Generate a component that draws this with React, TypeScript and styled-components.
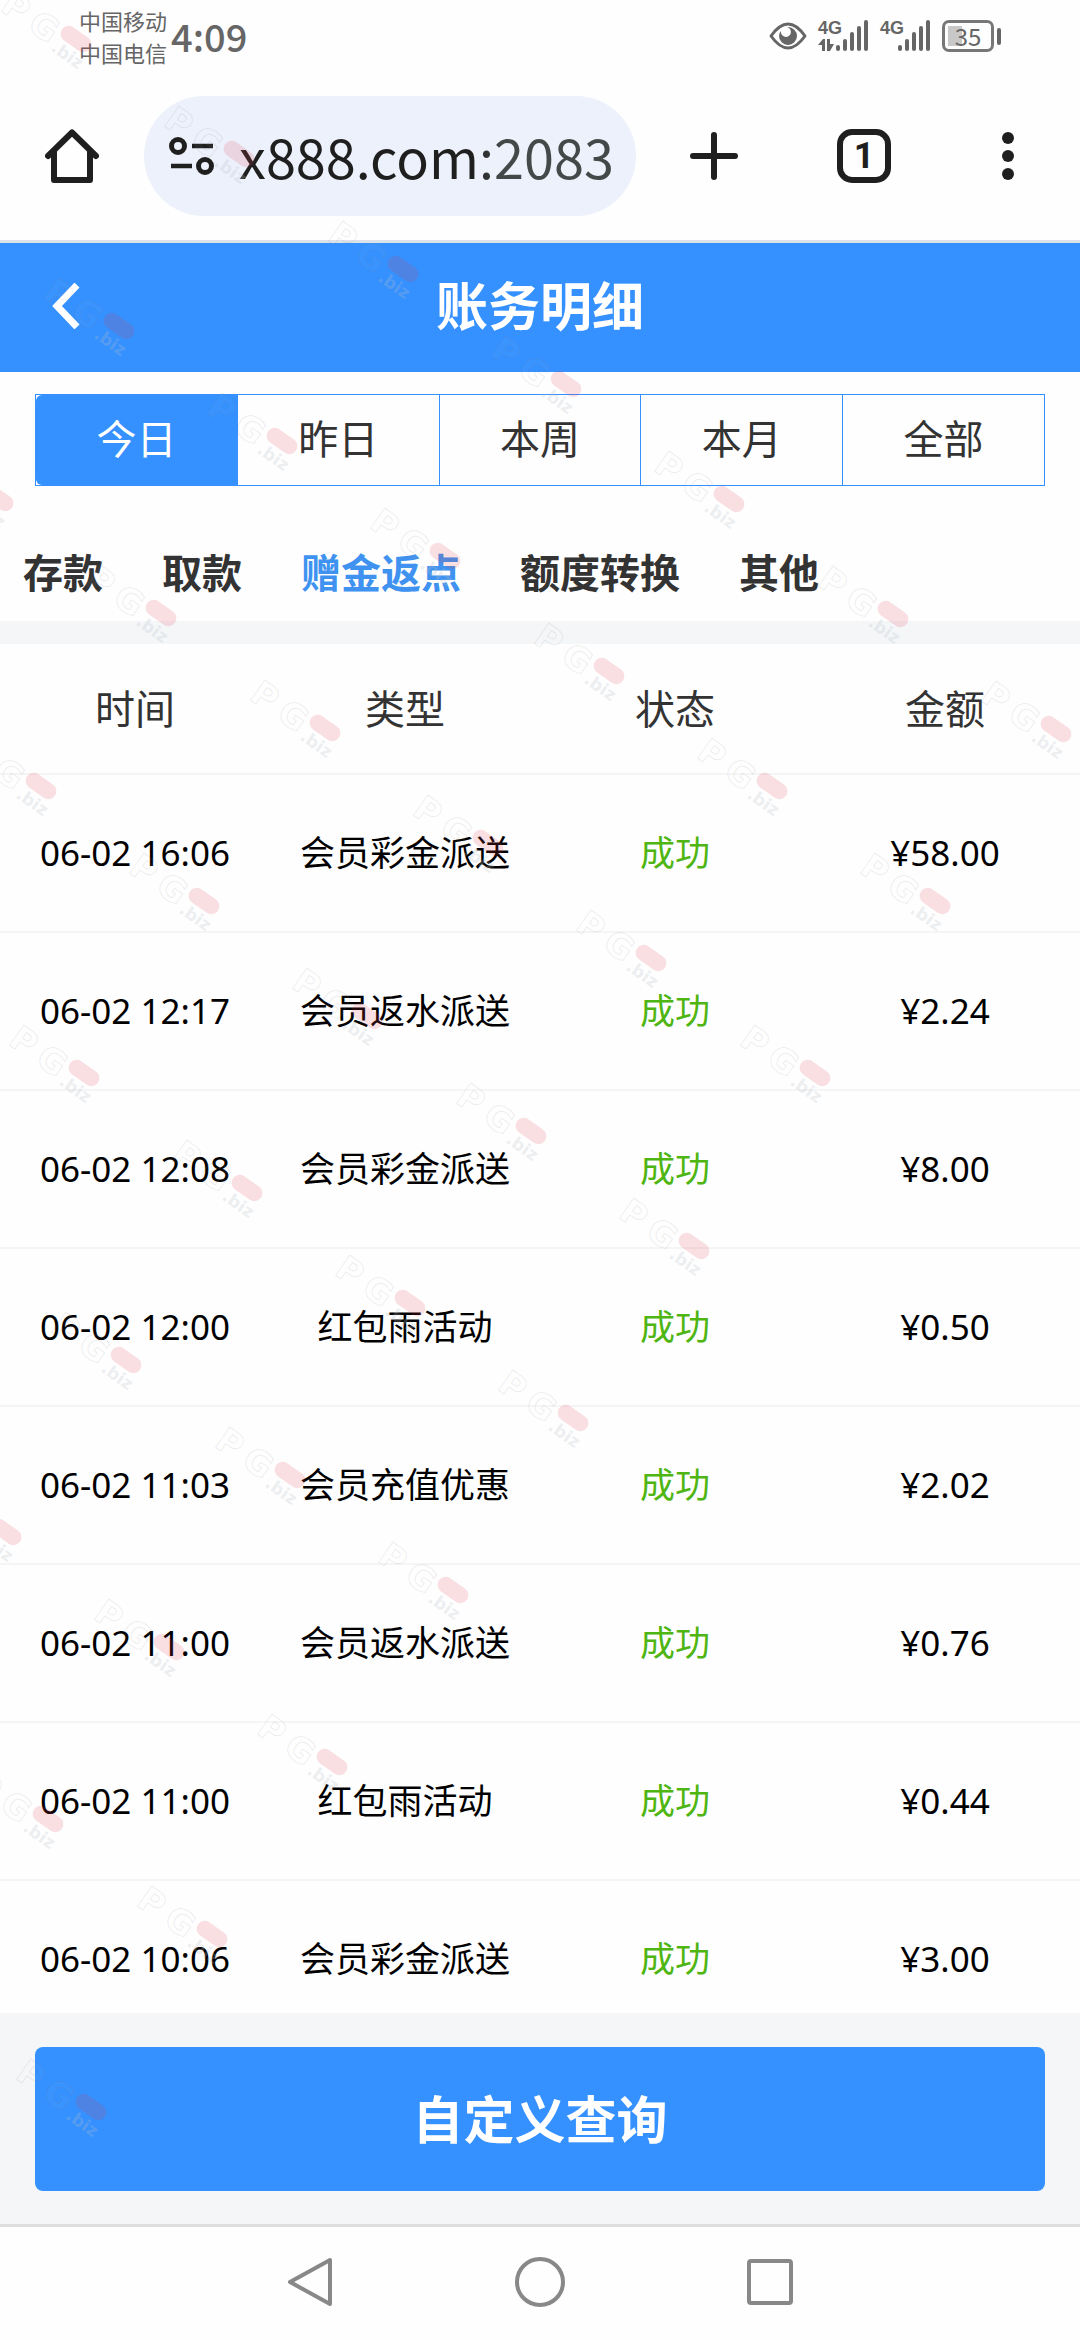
import React, { useState } from 'react';
import styled, { createGlobalStyle } from 'styled-components';

const BLUE = '#3491ff';
const INK = '#1f1f1f';
const GREY = '#666666';
const BODY_FONT = '"Noto Sans", "Noto Sans CJK SC", sans-serif';
const CJK_FONT = '"Noto Sans CJK SC", sans-serif';

const GlobalStyle = createGlobalStyle`
  *, *::before, *::after { box-sizing: border-box; }
  body { margin: 0; background: #fff; font-family: ${BODY_FONT}; }
  button, input { font: inherit; color: inherit; border: 0; padding: 0; margin: 0; background: none; border-radius: 0; }
  button { cursor: pointer; }
  svg { display: block; flex: none; }
`;

const Screen = styled.div`
  position: relative;
  display: flex;
  flex-direction: column;
  height: 100vh;
  overflow: hidden;
  background: #fefefe;
`;

/* ---------- status bar ---------- */

const StatusBar = styled.div`
  display: flex;
  align-items: center;
  justify-content: space-between;
  height: 72px;
  padding: 0 79px;
  color: ${GREY};
  font-family: ${CJK_FONT};
`;

const StatusGroup = styled.div<{ $gap: number }>`
  display: flex;
  align-items: center;
  gap: ${(p) => p.$gap}px;
`;

const Carriers = styled.div`
  font-size: 22px;
  line-height: 32px;
`;

const Clock = styled.time`
  font-size: 38px;
  font-weight: 500;
  line-height: 64px;
`;

const Signal = styled.div`
  display: flex;
  height: 32px;
`;

const Network = styled.div`
  display: flex;
  flex-direction: column;
  justify-content: space-between;
  width: 18px;
  font-family: "Liberation Sans Narrow", "Liberation Sans", sans-serif;
  font-size: 18px;
  font-weight: 700;
  line-height: 16px;
`;

const Battery = styled.div`
  display: flex;
  align-items: center;
  gap: 3px;
`;

const BatteryCase = styled.div`
  display: flex;
  align-items: center;
  justify-content: center;
  width: 52px;
  height: 32px;
  border: 3px solid #777;
  border-radius: 7px;
  background: linear-gradient(#c8c8c8, #c8c8c8) 3px 3px / 14px 20px no-repeat;
  font-size: 24px;
  line-height: 26px;
`;

const BatteryTip = styled.div`
  width: 4px;
  height: 17px;
  border-radius: 2px;
  background: ${GREY};
`;

/* ---------- browser toolbar ---------- */

const Toolbar = styled.div`
  display: flex;
  align-items: center;
  height: 171px;
  padding: 0;
  border-bottom: 3px solid #dce3ea;
  color: ${INK};
`;

const ToolButton = styled.button<{ $wide?: boolean }>`
  display: grid;
  place-items: center;
  flex: none;
  width: ${(p) => (p.$wide ? 156 : 144)}px;
  height: 120px;
`;

const AddressBar = styled.label`
  display: flex;
  align-items: center;
  flex: 1;
  min-width: 0;
  gap: 25px;
  height: 120px;
  padding: 0 24px;
  border-radius: 60px;
  background: #ecf1fb;
`;

const AddressInput = styled.input`
  flex: 1;
  min-width: 0;
  height: 80px;
  font-family: ${CJK_FONT};
  font-size: 54px;
  line-height: 80px;
  outline: none;
  background: linear-gradient(90deg, ${INK} 234px, #454849 262px);
  -webkit-background-clip: text;
  background-clip: text;
  -webkit-text-fill-color: transparent;
`;

const ToolGroup = styled.div`
  display: flex;
  flex: none;
`;

const TabCount = styled.span`
  display: grid;
  place-items: center;
  width: 54px;
  height: 54px;
  border: 6px solid ${INK};
  border-radius: 15px;
  font-family: Roboto, sans-serif;
  font-size: 36px;
  font-weight: 700;
  line-height: 40px;
`;

/* ---------- page ---------- */

const PageHeader = styled.header`
  display: grid;
  grid-template-columns: 132px 1fr 132px;
  align-items: center;
  flex: none;
  height: 129px;
  padding-bottom: 3px;
  background: ${BLUE};
  color: #fff;
`;

const BackButton = styled.button`
  display: grid;
  place-items: center;
  height: 100%;
`;

const PageTitle = styled.h1`
  margin: 0;
  text-align: center;
  font-size: 52px;
  font-weight: 700;
  line-height: 72px;
`;

const Periods = styled.div`
  display: flex;
  flex: none;
  height: 92px;
  margin: 22px 35px 0;
  border: 1px solid ${BLUE};
`;

const Period = styled.button<{ $active: boolean }>`
  flex: 1;
  padding-bottom: 2px;
  font-size: 40px;
  line-height: 56px;
  color: ${(p) => (p.$active ? '#fff' : '#333')};
  background: ${(p) => (p.$active ? BLUE : 'transparent')};

  &:not(:first-child) { border-left: 1px solid ${BLUE}; }
  &:first-child { border-radius: 6px 0 0 6px; }
`;

const Categories = styled.nav`
  display: flex;
  align-items: center;
  flex: none;
  gap: 59px;
  height: 158px;
  padding: 39px 23px 0;
  border-bottom: 23px solid #f4f6f8;
`;

const Category = styled.button<{ $active: boolean }>`
  flex: none;
  font-size: 40px;
  font-weight: 700;
  line-height: 56px;
  color: ${(p) => (p.$active ? '#3f92f0' : '#333')};
`;

const Records = styled.main`
  flex: 1;
  min-height: 0;
  overflow: hidden;
`;

const RecordTable = styled.table`
  width: 100%;
  table-layout: fixed;
  border-collapse: separate;
  border-spacing: 0;
  text-align: center;
`;

const HeadCell = styled.th`
  height: 131px;
  padding: 0;
  border-bottom: 2px solid #f5f5f5;
  color: #333;
  font-size: 40px;
  font-weight: 400;
  line-height: 56px;
`;

const Cell = styled.td<{ $success?: boolean }>`
  height: 158px;
  padding: 0;
  border-bottom: 2px solid #f5f5f5;
  color: ${(p) => (p.$success ? '#4fb512' : '#000')};
  font-size: 35px;
  line-height: 48px;
  white-space: nowrap;
`;

const ActionBar = styled.footer`
  flex: none;
  padding: 34px 35px 33px;
  background: #f4f6f8;
`;

const QueryButton = styled.button`
  display: block;
  width: 100%;
  height: 144px;
  border-radius: 8px;
  background: ${BLUE};
  color: #fff;
  font-size: 51px;
  font-weight: 700;
  line-height: 72px;
`;

const SystemNav = styled.nav`
  display: flex;
  justify-content: center;
  gap: 86px;
  flex: none;
  height: 116px;
  border-top: 3px solid #dedede;
`;

const NavButton = styled.button`
  display: grid;
  place-items: center;
  width: 144px;
  height: 110px;
`;

const WatermarkLayer = styled.svg`
  position: absolute;
  inset: 0;
  width: 100%;
  height: 100%;
  pointer-events: none;
`;

/* ---------- drawings ---------- */

const SignalBars = () => (
  <svg width="33" height="32" viewBox="0 0 33 32" fill={GREY}>
    {[6, 12, 19, 25, 31].map((h, i) => (
      <rect key={h} x={i * 7} y={31 - h} width="4" height={h} rx="2" />
    ))}
  </svg>
);

const DataArrows = () => (
  <svg width="18" height="13" viewBox="0 0 18 13" fill={GREY}>
    <path d="M0 6 L5 0 H7 V12 H4 V6 Z" />
    <path d="M9 0 H12 V5 H16 L12 12 H9 Z" />
  </svg>
);

const Eye = () => (
  <svg width="38" height="28" viewBox="0 0 38 28">
    <path d="M2 14 Q19 -10 36 14 Q19 38 2 14 Z" fill="none" stroke={GREY} strokeWidth="3" strokeLinejoin="round" />
    <path d="M19 5 A9 9 0 1 1 10 14 Q10 11 12 9 A5 5 0 1 0 18 5 Z" fill={GREY} />
  </svg>
);

const marks: { x: number; y: number }[] = [];
for (let row = 0; row < 9; row += 1) {
  for (let col = 0; col < 7; col += 1) {
    const x = Math.round(76 + 163.3 * col - 120.6 * row);
    const y = Math.round(39 + 115 * col + 172.2 * row);
    if (x > -20) marks.push({ x, y });
  }
}

const Watermark = () => (
  <WatermarkLayer aria-hidden="true">
    {marks.map(({ x, y }) => (
      <g key={`${x}-${y}`} transform={`translate(${x} ${y}) rotate(35)`} fontFamily="DejaVu Sans, sans-serif">
        <g fill="#ffffff" fillOpacity="0.04" stroke="#808080" strokeOpacity="0.14" strokeWidth="1" fontSize="34" fontWeight="700">
          <text x="-80" y="20">P</text>
          <text x="-47" y="20">G</text>
        </g>
        <text x="-15" y="24" fontSize="17" fontWeight="700" fill="#b8c0c8" fillOpacity="0.25">.biz</text>
        <rect x="-17" y="-8" width="34" height="16" rx="8" fill="#e04050" fillOpacity="0.16" />
      </g>
    ))}
  </WatermarkLayer>
);

/* ---------- data ---------- */

const periods = ['今日', '昨日', '本周', '本月', '全部'];
const categories = ['存款', '取款', '赠金返点', '额度转换', '其他'];
const records = [
  ['06-02 16:06', '会员彩金派送', '¥58.00'],
  ['06-02 12:17', '会员返水派送', '¥2.24'],
  ['06-02 12:08', '会员彩金派送', '¥8.00'],
  ['06-02 12:00', '红包雨活动', '¥0.50'],
  ['06-02 11:03', '会员充值优惠', '¥2.02'],
  ['06-02 11:00', '会员返水派送', '¥0.76'],
  ['06-02 11:00', '红包雨活动', '¥0.44'],
  ['06-02 10:06', '会员彩金派送', '¥3.00'],
];

export default function App() {
  const [period, setPeriod] = useState('今日');
  const [category, setCategory] = useState('赠金返点');

  return (
    <Screen>
      <GlobalStyle />
      <StatusBar>
        <StatusGroup $gap={4}>
          <Carriers>
            <div>中国移动</div>
            <div>中国电信</div>
          </Carriers>
          <Clock>4:09</Clock>
        </StatusGroup>
        <StatusGroup $gap={11}>
          <Eye />
          <Signal>
            <Network>4G<DataArrows /></Network>
            <SignalBars />
          </Signal>
          <Signal>
            <Network>4G</Network>
            <SignalBars />
          </Signal>
          <Battery>
            <BatteryCase>35</BatteryCase>
            <BatteryTip />
          </Battery>
        </StatusGroup>
      </StatusBar>

      <Toolbar>
        <ToolButton aria-label="主页">
          <svg width="54" height="54" viewBox="0 0 54 54" fill="none" stroke={INK} strokeWidth="6" strokeLinecap="round" strokeLinejoin="round">
            <path d="M3 27 L27 3.500 L51 27" />
            <path d="M9 23 V51 H45 V23" />
          </svg>
        </ToolButton>
        <AddressBar>
          <svg width="46" height="40" viewBox="0 0 46 40" fill="none" stroke={INK} strokeWidth="5">
            <circle cx="10" cy="10" r="6.500" />
            <path d="M24 10 H45 M3 30 H24" strokeWidth="4.500" />
            <circle cx="37" cy="30" r="6.500" />
          </svg>
          <AddressInput aria-label="网址" defaultValue="x888.com:2083" spellCheck={false} />
        </AddressBar>
        <ToolGroup>
          <ToolButton $wide aria-label="新标签页">
            <svg width="48" height="48" viewBox="0 0 48 48" stroke={INK} strokeWidth="6" strokeLinecap="round">
              <path d="M24 3 V45 M3 24 H45" />
            </svg>
          </ToolButton>
          <ToolButton aria-label="切换标签页">
            <TabCount>1</TabCount>
          </ToolButton>
          <ToolButton aria-label="更多">
            <svg width="12" height="48" viewBox="0 0 12 48" fill={INK}>
              <circle cx="6" cy="6" r="6" />
              <circle cx="6" cy="24" r="6" />
              <circle cx="6" cy="42" r="6" />
            </svg>
          </ToolButton>
        </ToolGroup>
      </Toolbar>

      <PageHeader>
        <BackButton aria-label="返回">
          <svg width="28" height="46" viewBox="0 0 28 46" fill="none" stroke="#fff" strokeWidth="7">
            <path d="M25 2 L5 23 L25 44" />
          </svg>
        </BackButton>
        <PageTitle>账务明细</PageTitle>
      </PageHeader>

      <Periods>
        {periods.map((name) => (
          <Period key={name} $active={name === period} aria-pressed={name === period} onClick={() => setPeriod(name)}>
            {name}
          </Period>
        ))}
      </Periods>

      <Categories>
        {categories.map((name) => (
          <Category key={name} $active={name === category} aria-pressed={name === category} onClick={() => setCategory(name)}>
            {name}
          </Category>
        ))}
      </Categories>

      <Records>
        <RecordTable>
          <thead>
            <tr>
              {['时间', '类型', '状态', '金额'].map((name) => (
                <HeadCell key={name} scope="col">{name}</HeadCell>
              ))}
            </tr>
          </thead>
          <tbody>
            {records.map(([time, kind, amount], i) => (
              <tr key={i}>
                <Cell>{time}</Cell>
                <Cell>{kind}</Cell>
                <Cell $success>成功</Cell>
                <Cell>{amount}</Cell>
              </tr>
            ))}
          </tbody>
        </RecordTable>
      </Records>

      <ActionBar>
        <QueryButton>自定义查询</QueryButton>
      </ActionBar>

      <SystemNav>
        <NavButton aria-label="后退">
          <svg width="50" height="50" viewBox="0 0 50 50" fill="none" stroke="#888" strokeWidth="4" strokeLinejoin="round">
            <path d="M45 3 V47 L5 25 Z" />
          </svg>
        </NavButton>
        <NavButton aria-label="主屏幕">
          <svg width="50" height="50" viewBox="0 0 50 50" fill="none" stroke="#888" strokeWidth="4">
            <circle cx="25" cy="25" r="23" />
          </svg>
        </NavButton>
        <NavButton aria-label="最近任务">
          <svg width="50" height="50" viewBox="0 0 50 50" fill="none" stroke="#888" strokeWidth="4">
            <rect x="4" y="4" width="42" height="42" rx="2" />
          </svg>
        </NavButton>
      </SystemNav>
      <Watermark />
    </Screen>
  );
}
